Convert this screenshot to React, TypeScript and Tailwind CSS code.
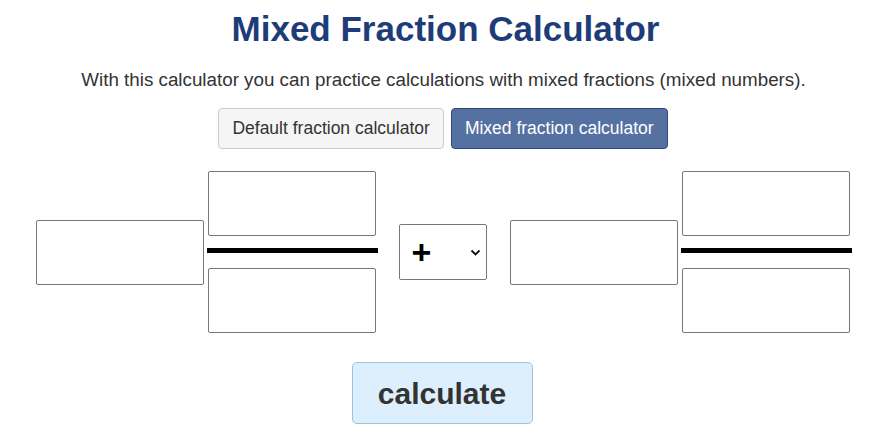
import { useState } from 'react'

function Box({ className = '' }: { className?: string }) {
  return (
    <input
      type="text"
      className={`w-[168px] h-[65px] border border-[#767676] rounded-[2px] bg-white outline-none ${className}`}
    />
  )
}

function Fraction() {
  return (
    <div className="flex flex-col items-center w-[171px]">
      <Box />
      <div className="w-full h-[5px] bg-black mt-[12px] mb-[15px]" />
      <Box />
    </div>
  )
}

function OpSelect() {
  const [op, setOp] = useState('+')
  return (
    <div className="relative w-[88px] h-[56px]">
      <select
        value={op}
        onChange={(e) => setOp(e.target.value)}
        className="appearance-none w-full h-full border border-[#767676] rounded-[2px] bg-white pl-[12px] text-[34px] font-bold text-black outline-none"
      >
        <option>+</option>
        <option>-</option>
        <option>*</option>
        <option>:</option>
      </select>
      <svg
        className="absolute right-[6px] top-[25px] pointer-events-none"
        width="11"
        height="7"
        viewBox="0 0 11 7"
      >
        <path d="M1.5 1.5 L5.5 5.5 L9.5 1.5" fill="none" stroke="#111" strokeWidth="1.8" />
      </svg>
    </div>
  )
}

export default function App() {
  return (
    <div className="w-[891px] h-[440px] bg-white flex flex-col items-center font-['Liberation_Sans',Arial,sans-serif]">
      <h1 className="mt-[9px] text-[35px] leading-[40px] font-bold text-[#1d3c78]">
        Mixed Fraction Calculator
      </h1>
      <p className="mt-[20px] mr-[4px] text-[18.8px] leading-[22px] text-[#333]">
        With this calculator you can practice calculations with mixed fractions (mixed numbers).
      </p>
      <div className="mt-[17px] flex gap-[7px] mr-[5px]">
        <button className="h-[41px] px-[13px] rounded-[4px] border border-[#ccc] bg-[#f5f5f5] text-[17.5px] text-[#333]">
          Default fraction calculator
        </button>
        <button className="h-[41px] px-[13px] rounded-[4px] border border-[#2e4a7a] bg-[#5471a1] text-[17.5px] text-white">
          Mixed fraction calculator
        </button>
      </div>
      <div className="mt-[22px] flex items-center ml-[-4px]">
        <Box />
        <div className="ml-[3px]">
          <Fraction />
        </div>
        <div className="ml-[21px]">
          <OpSelect />
        </div>
        <div className="ml-[23px]">
          <Box />
        </div>
        <div className="ml-[3px]">
          <Fraction />
        </div>
      </div>
      <button className="mt-[29px] mr-[7px] w-[181px] h-[62px] rounded-[5px] border border-[#9cc3e0] bg-[#ddeefc] text-[30px] font-bold text-[#333]">
        calculate
      </button>
    </div>
  )
}
